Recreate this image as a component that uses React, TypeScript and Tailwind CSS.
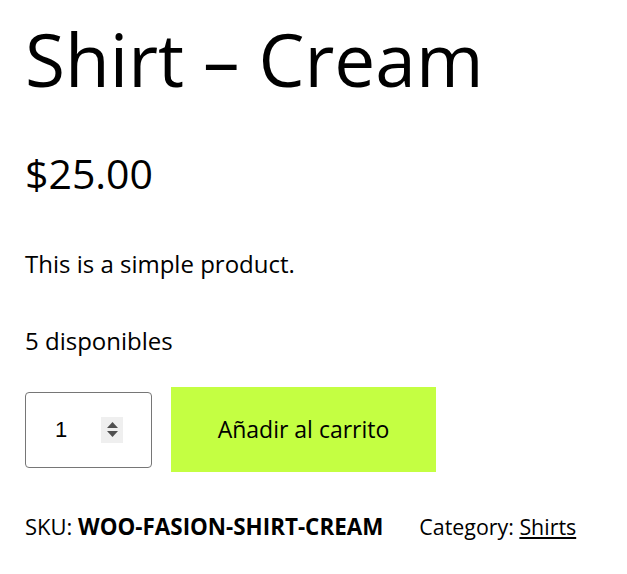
import React from 'react';

export default function App() {
  return (
    <div className="min-h-screen bg-white text-black px-[25px] font-['Open_Sans',sans-serif]">
      <h1 className="text-[73px] leading-none pt-[22px]">Shirt – Cream</h1>
      <p className="text-[41px] leading-none mt-[58px]">$25.00</p>
      <p className="text-[24px] leading-none mt-[58px]">This is a simple product.</p>
      <p className="text-[24px] leading-none mt-[53px]">5 disponibles</p>
      <form className="flex items-center gap-[19px] mt-[34px]">
        <div className="w-[127px] h-[76px] border border-[#767676] rounded-[4px] flex items-center pl-[29px] pr-[28px]">
          <span className="flex-1 text-[22px] font-['Liberation_Sans',sans-serif]">1</span>
          <div className="w-[22px] h-[26px] bg-[#efefef] flex flex-col items-center justify-center gap-[3px]">
            <svg width="11" height="6" viewBox="0 0 11 6"><path d="M0 6 L5.5 0 L11 6 Z" fill="#505050" /></svg>
            <svg width="11" height="6" viewBox="0 0 11 6"><path d="M0 0 L11 0 L5.5 6 Z" fill="#505050" /></svg>
          </div>
        </div>
        <button type="button" className="w-[265px] h-[85px] bg-[#c4ff42] text-[23px]">Añadir al carrito</button>
      </form>
      <div className="flex items-baseline mt-[43px] text-[22px] leading-none">
        <span>SKU: <b className="font-bold text-[22.4px]">WOO-FASION-SHIRT-CREAM</b></span>
        <span className="ml-[36px] text-[21.4px]">Category: <a href="#" className="underline">Shirts</a></span>
      </div>
    </div>
  );
}
